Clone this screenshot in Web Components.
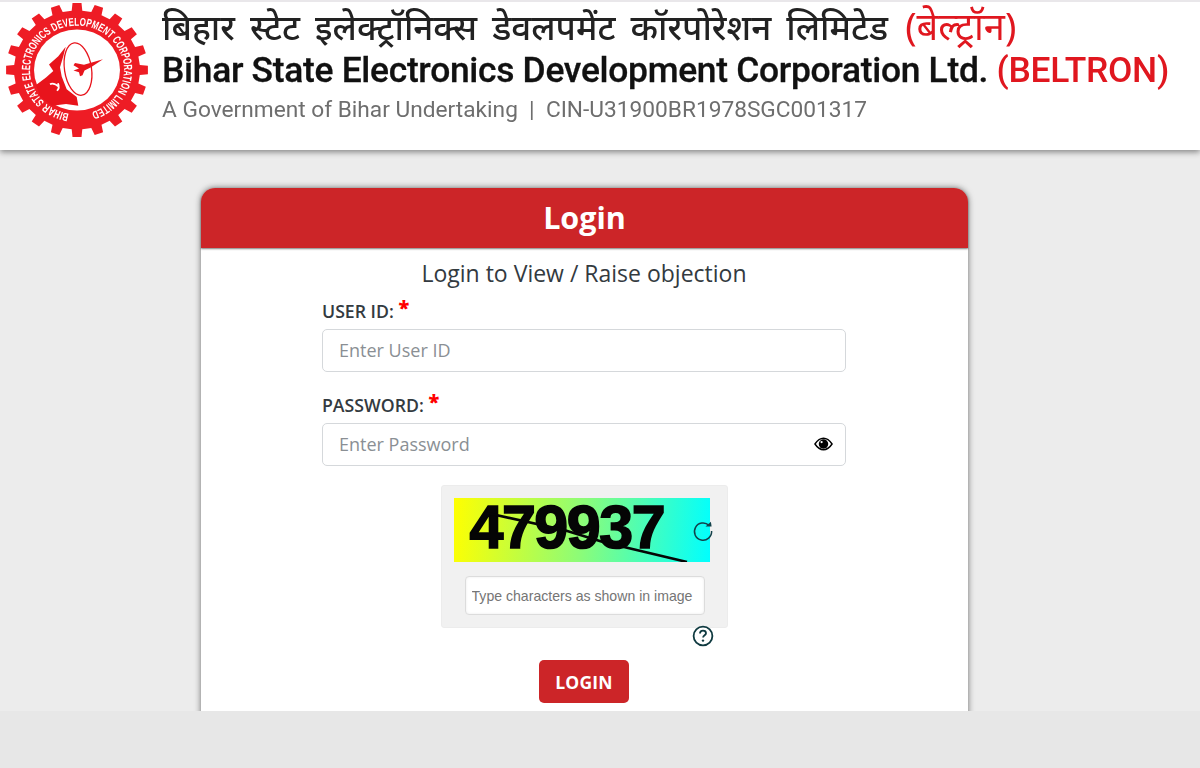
<!DOCTYPE html>
<html lang="en">
<head>
<meta charset="utf-8">
<title>Login</title>
<style>
  html, body { margin: 0; height: 100%; overflow: hidden; }
  body { background: #ececec; font-family: "Open Sans", "Liberation Sans", sans-serif; }
  login-page { height: 768px; }
</style>
</head>
<body>
<login-page>
  <site-header slot="header"></site-header>
  <login-card title="Login" slot="main">
    <p-heading>Login to View / Raise objection</p-heading>
    <form-field label="USER ID:" placeholder="Enter User ID"></form-field>
    <form-field label="PASSWORD:" placeholder="Enter Password" eye></form-field>
    <captcha-box></captcha-box>
    <red-button>LOGIN</red-button>
  </login-card>
</login-page>

<script>
class LoginPage extends HTMLElement {
  constructor() {
    super();
    this.attachShadow({ mode: "open" });
    this.shadowRoot.innerHTML = `
      <style>
        :host { display: grid; grid-template-rows: 150px 1fr 57px; }
        main { overflow: hidden; min-height: 0; padding: 38px 31px 0 0; display: flex; justify-content: center; align-items: flex-start; }
        footer { background: #e7e7e7; position: relative; }
      </style>
      <slot name="header"></slot>
      <main><slot name="main"></slot></main>
      <footer></footer>
    `;
  }
}

class BeltronLogo extends HTMLElement {
  constructor() {
    super();
    this.attachShadow({ mode: "open" });
    // gear outline is computed, tooth by tooth
    const teeth = 20, cx = 77, cy = 68, outer = 71, root = 63;
    let pts = [];
    for (let i = 0; i < teeth; i++) {
      const a = (i / teeth) * Math.PI * 2 - Math.PI / 2;
      const step = (Math.PI * 2) / teeth;
      [[-0.27, root], [-0.2, outer], [0.2, outer], [0.27, root]].forEach(([k, r]) => {
        pts.push((cx + Math.cos(a + k * step) * r).toFixed(1) + "," + (cy + Math.sin(a + k * step) * r).toFixed(1));
      });
    }
    this.shadowRoot.innerHTML = `
      <style>
        :host { display: block; width: 142px; height: 134px; flex: none; margin: 1px 0 0 6px; }
        svg { display: block; filter: blur(.3px); }
        text { font: 700 12px "Liberation Sans", sans-serif; fill: #fff; }
      </style>
      <svg width="142" height="134" viewBox="6 -3 142 142" preserveAspectRatio="none">
        <defs><path id="ring" d="M69 114.3 A47 47 0 1 1 85 114.3"></path></defs>
        <polygon points="${pts.join(" ")}" fill="#ee1c25"></polygon>
        <circle cx="77" cy="68" r="43" fill="#fff"></circle>
        <text textLength="272" lengthAdjust="spacingAndGlyphs"><textPath href="#ring">BIHAR STATE ELECTRONICS DEVELOPMENT CORPORATION LIMITED</textPath></text>
        <g fill="#e8141c">
          <path d="M65.7 43.3 L58.3 53.3 L49 62.3 L53.3 69 L46 76 L36 84 L40 96 L52 106 L66 104 L78.3 106 L76.7 96.7 L66.7 88.3 L61.7 75 L60 65 L63.3 53.3 Z"></path>
          <path d="M103 56.5 L84 62.5 L75 60.5 L73.5 63 L79 66.5 L73.5 68.5 L79 70.5 L80 74.5 L82.5 73.5 L84.5 68.5 L91 65 Z"></path>
        </g>
        <ellipse cx="78" cy="67" rx="13.5" ry="28" transform="rotate(-8 78 67)" fill="none" stroke="#e8141c" stroke-width="1.3"></ellipse>
        <path d="M50 83 q4 -2 9 3 M57 90 q3 -3 1 -8" fill="none" stroke="#fff" stroke-width="1.8"></path>
      </svg>
    `;
  }
}

class SiteHeader extends HTMLElement {
  constructor() {
    super();
    this.attachShadow({ mode: "open" });
    this.shadowRoot.innerHTML = `
      <style>
        :host { display: flex; position: relative; z-index: 1; background: #fff; border-top: 2px solid #e9e7ea; box-sizing: border-box; height: 150px; box-shadow: 0 2px 6px rgba(0,0,0,.45); font-family: Roboto, "Noto Sans", sans-serif; }
        .txt { margin-left: 14px; display: flex; flex-direction: column; filter: blur(.3px); }
        .hi { font: 500 35px/40px "Noto Sans", "Noto Sans Devanagari", sans-serif; color: #222; white-space: nowrap; word-spacing: 6px; margin-top: 5px; }
        .hi .red { font-size: 38px; line-height: 30px; word-spacing: 0; margin-left: 2px; }
        .en { font: 500 35.4px/44px Roboto, sans-serif; color: #111; white-space: nowrap; letter-spacing: -.3px; margin-top: 1px; -webkit-text-stroke: .3px #111; }
        .en .red { font-weight: 500; -webkit-text-stroke: 0; }
        .sub { font: 400 22.7px/30px Roboto, sans-serif; color: #6e6e6e; white-space: pre; margin-top: 3px; }
        .red { color: #e0171f; font-weight: 400; }
      </style>
      <beltron-logo></beltron-logo>
      <div class="txt">
        <div class="hi">बिहार स्टेट इलेक्ट्रॉनिक्स डेवलपमेंट कॉरपोरेशन लिमिटेड <span class="red">(बेल्ट्रॉन)</span></div>
        <div class="en">Bihar State Electronics Development Corporation Ltd. <span class="red">(BELTRON)</span></div>
        <div class="sub">A Government of Bihar Undertaking  |  CIN-U31900BR1978SGC001317</div>
      </div>
    `;
  }
}

class LoginCard extends HTMLElement {
  constructor() {
    super();
    this.attachShadow({ mode: "open" });
    this.shadowRoot.innerHTML = `
      <style>
        :host { display: block; width: 767px; background: #fff; border-radius: 14px 14px 0 0; box-shadow: 0 0 6px rgba(0,0,0,.55); font-family: "Open Sans", sans-serif; }
        h2 { margin: 0; height: 60px; background: #cc2528; color: #fff; font: 700 30.5px/58px "Open Sans", sans-serif; text-align: center; border-radius: 14px 14px 0 0; box-shadow: 0 1px 2px rgba(0,0,0,.5); }
        .body { width: 524px; margin-left: 121px; padding-bottom: 60px; display: flex; flex-direction: column; align-items: center; }
      </style>
      <h2></h2>
      <div class="body"><slot></slot></div>
    `;
    this.shadowRoot.querySelector("h2").textContent = this.getAttribute("title");
  }
}

class PHeading extends HTMLElement {
  constructor() {
    super();
    this.attachShadow({ mode: "open" });
    this.shadowRoot.innerHTML = `
      <style>:host { display: block; font: 400 23px/29px "Open Sans", sans-serif; color: #333a40; margin-top: 11px; margin-bottom: 3px; text-align: center; }</style>
      <slot></slot>
    `;
  }
}

class FormField extends HTMLElement {
  constructor() {
    super();
    this.attachShadow({ mode: "open" });
    const eye = this.hasAttribute("eye") ? `
      <svg class="eye" width="19" height="14" viewBox="0 0 20 14">
        <path d="M1 7 C4 2.5 7 1 10 1 C13 1 16 2.5 19 7 C16 11.5 13 13 10 13 C7 13 4 11.5 1 7 Z" fill="none" stroke="#000" stroke-width="1.5"></path>
        <circle cx="10" cy="7" r="5" fill="#000"></circle>
        <circle cx="8" cy="5" r="1.2" fill="#fff"></circle>
      </svg>` : "";
    this.shadowRoot.innerHTML = `
      <style>
        :host { display: block; width: 100%; margin-top: 8px; margin-bottom: 13px; font-family: "Open Sans", sans-serif; }
        label { display: block; font: 600 17.7px/24px "Open Sans", sans-serif; color: #333a40; margin-bottom: 6px; }
        label b { color: #f00; font-size: 20px; line-height: 10px; vertical-align: 3px; }
        .wrap { position: relative; display: flex; }
        input { width: 100%; height: 43px; box-sizing: border-box; border: 1px solid #d5d8db; border-radius: 5px; padding: 0 16px 2px; font: 400 18px "Open Sans", sans-serif; background: #fff; outline: 0; }
        input::placeholder { color: #8a8f94; opacity: 1; }
        .eye { position: absolute; right: 13px; top: 14px; }
      </style>
      <label><span></span> <b>*</b></label>
      <div class="wrap"><input type="text">${eye}</div>
    `;
    this.shadowRoot.querySelector("label span").textContent = this.getAttribute("label");
    this.shadowRoot.querySelector("input").placeholder = this.getAttribute("placeholder");
  }
}

class CaptchaBox extends HTMLElement {
  constructor() {
    super();
    this.attachShadow({ mode: "open" });
    this.shadowRoot.innerHTML = `
      <style>
        :host { display: block; position: relative; width: 287px; margin-top: 6px; }
        .box { box-sizing: border-box; height: 143px; background: #f1f1f1; border: 1px solid #ececec; border-radius: 3px; padding: 12px; display: flex; flex-direction: column; align-items: center; }
        .img { position: relative; align-self: flex-start; width: 256px; height: 64px; flex: none; background: linear-gradient(95deg, #ff0 0%, #8cfc78 50%, #0ff 100%); }
        .num { position: absolute; left: 16px; top: -9px; font: 700 61px/76px "Liberation Sans", sans-serif; letter-spacing: -1.5px; color: #050505; -webkit-text-stroke: 1.6px #050505; }
        .img svg { position: absolute; inset: 0; }
        .refresh { position: absolute; left: 251px; top: 35px; }
        input { width: 240px; height: 39px; box-sizing: border-box; margin: 14px 0 0 1px; flex: none; border: 1px solid #dcdcdc; border-radius: 4px; padding: 0 6px; font: 400 14.1px "Liberation Sans", Arial, sans-serif; background: #fff; box-shadow: inset 0 0 3px rgba(0,0,0,.08); outline: 0; }
        input::placeholder { color: #757575; opacity: 1; }
        .help { display: block; margin: -3px 0 0 251px; position: relative; }
      </style>
      <div class="box">
        <div class="img">
          <span class="num">479937</span>
          <svg width="256" height="64" viewBox="0 0 256 64"><path d="M33 15 L110 32 L149 44 L233 64" stroke="#050505" stroke-width="2.6" fill="none"></path></svg>
        </div>
        <input type="text" placeholder="Type characters as shown in image">
      </div>
      <svg class="refresh" width="22" height="22" viewBox="0 0 22 22">
        <path d="M17 5.4 A8.6 8.6 0 1 0 19.6 11" fill="none" stroke="#12414a" stroke-width="1.5"></path>
        <path d="M13.5 6.4 L19.6 6.6 L18.9 1.8 Z" fill="#12414a"></path>
      </svg>
      <svg class="help" width="22" height="22" viewBox="0 0 22 22">
        <circle cx="11" cy="11" r="9.4" fill="#fff" stroke="#0f3a40" stroke-width="1.8"></circle>
        <path d="M8 8.6 C8 6.6 9.4 5.7 11 5.7 C12.8 5.7 14 6.8 14 8.2 C14 10.2 11.1 10.4 11.1 12.6" fill="none" stroke="#0f3a40" stroke-width="1.8"></path>
        <circle cx="11" cy="15.6" r="1.2" fill="#0f3a40"></circle>
      </svg>
    `;
  }
}

class RedButton extends HTMLElement {
  constructor() {
    super();
    this.attachShadow({ mode: "open" });
    this.shadowRoot.innerHTML = `
      <style>
        :host { display: block; margin-top: 13px; }
        button { display: block; width: 90px; height: 43px; border: 0; border-radius: 5px; background: #cc2528; color: #fff; font: 700 17.5px "Open Sans", sans-serif; letter-spacing: .2px; padding: 0; }
      </style>
      <button><slot></slot></button>
    `;
  }
}

customElements.define("login-page", LoginPage);
customElements.define("beltron-logo", BeltronLogo);
customElements.define("site-header", SiteHeader);
customElements.define("login-card", LoginCard);
customElements.define("p-heading", PHeading);
customElements.define("form-field", FormField);
customElements.define("captcha-box", CaptchaBox);
customElements.define("red-button", RedButton);
</script>
</body>
</html>
